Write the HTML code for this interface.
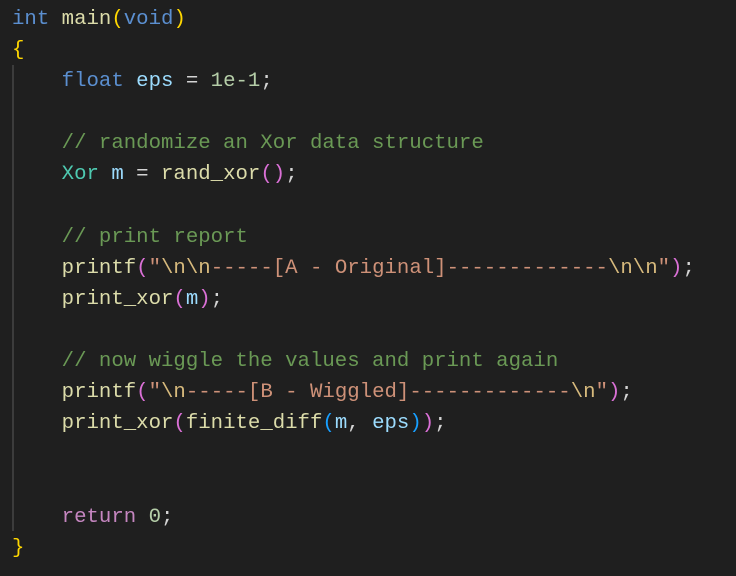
<!DOCTYPE html>
<html><head><style>
html,body{margin:0;padding:0;background:#1f1f1f;width:736px;height:576px;overflow:hidden}
pre{margin:0;position:absolute;left:12px;top:4px;font-family:"Liberation Mono",monospace;font-size:20.7px;line-height:31.1px;color:#d4d4d4}
.guide{position:absolute;left:12px;top:65px;width:2px;height:466px;background:#3c3c3c}
.k{color:#5b8fd0}.f{color:#dcdcaa}.v{color:#9cdcfe}.t{color:#4ec9b0}.n{color:#b5cea8}
.c{color:#6a9955}.s{color:#ce9178}.e{color:#d7ba7d}.y{color:#ffd700}.p{color:#da70d6}.b{color:#179fff}.r{color:#c586c0}
</style></head><body>
<div class="guide"></div>
<pre><span class="k">int</span> <span class="f">main</span><span class="y">(</span><span class="k">void</span><span class="y">)</span>
<span class="y">{</span>
    <span class="k">float</span> <span class="v">eps</span> = <span class="n">1e-1</span>;

    <span class="c">// randomize an Xor data structure</span>
    <span class="t">Xor</span> <span class="v">m</span> = <span class="f">rand_xor</span><span class="p">()</span>;

    <span class="c">// print report</span>
    <span class="f">printf</span><span class="p">(</span><span class="s">"</span><span class="e">\n\n</span><span class="s">-----[A - Original]-------------</span><span class="e">\n\n</span><span class="s">"</span><span class="p">)</span>;
    <span class="f">print_xor</span><span class="p">(</span><span class="v">m</span><span class="p">)</span>;

    <span class="c">// now wiggle the values and print again</span>
    <span class="f">printf</span><span class="p">(</span><span class="s">"</span><span class="e">\n</span><span class="s">-----[B - Wiggled]-------------</span><span class="e">\n</span><span class="s">"</span><span class="p">)</span>;
    <span class="f">print_xor</span><span class="p">(</span><span class="f">finite_diff</span><span class="b">(</span><span class="v">m</span>, <span class="v">eps</span><span class="b">)</span><span class="p">)</span>;


    <span class="r">return</span> <span class="n">0</span>;
<span class="y">}</span></pre>
</body></html>
